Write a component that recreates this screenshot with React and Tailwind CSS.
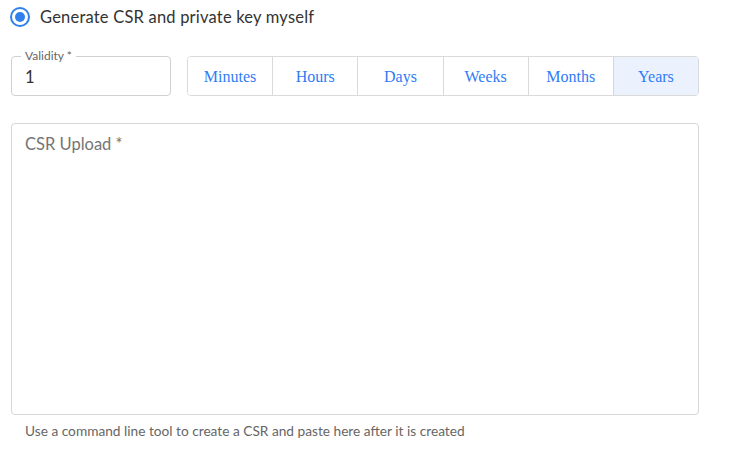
import { useState } from "react";

const units = ["Minutes", "Hours", "Days", "Weeks", "Months", "Years"];

export default function App() {
  const [unit, setUnit] = useState("Years");
  const [validity, setValidity] = useState("1");

  return (
    <div className="w-[740px] h-[459px] bg-white font-['Lato',sans-serif] text-[#333]">
      {/* radio option */}
      <label className="flex items-center gap-[10px] pl-[10px] pt-[6px] h-[22px] box-content">
        <span className="w-[20px] h-[20px] rounded-full border-2 border-[#2f80ed] flex items-center justify-center">
          <span className="w-[10px] h-[10px] rounded-full bg-[#2f80ed]" />
        </span>
        <span className="text-[16.5px] tracking-[0.2px]">Generate CSR and private key myself</span>
      </label>

      {/* validity + unit */}
      <div className="flex gap-4 pl-[11px] pr-[41px] mt-[28px]">
        <div className="relative w-[160px] h-[40px] border border-[#d0d0d0] rounded-[4px] px-[13px] flex items-center">
          <span className="absolute -top-[8px] left-[9px] px-[4px] bg-white text-[12px] leading-[14px] text-[#666]">
            Validity *
          </span>
          <input
            value={validity}
            onChange={(e) => setValidity(e.target.value)}
            className="w-full text-[16.5px] leading-[20px] mt-[1px] outline-none bg-transparent"
          />
        </div>

        <div className="flex flex-1 h-[40px] border border-[#dadada] rounded-[4px] overflow-hidden">
          {units.map((u, i) => (
            <button
              key={u}
              onClick={() => setUnit(u)}
              className={`flex-1 font-['Liberation_Serif',serif] text-[16px] pt-[2px] text-[#2f7cf6] ${
                i > 0 ? "border-l border-[#dadada]" : ""
              } ${unit === u ? "bg-[#ebf2fe] border-l-[#cdd6ea]" : "bg-white"}`}
            >
              {u}
            </button>
          ))}
        </div>
      </div>

      {/* CSR textarea */}
      <div className="pl-[11px] pr-[41px] mt-[27px]">
        <textarea
          placeholder="CSR Upload *"
          className="block w-full h-[292px] border border-[#d6d6d6] rounded-[4px] px-[13px] py-[9px] text-[16.5px] leading-[22px] resize-none outline-none placeholder:text-[#757575]"
        />
        <p className="mt-[6px] pl-[14px] text-[13.7px] leading-[20px] text-[#666]">
          Use a command line tool to create a CSR and paste here after it is created
        </p>
      </div>
    </div>
  );
}
